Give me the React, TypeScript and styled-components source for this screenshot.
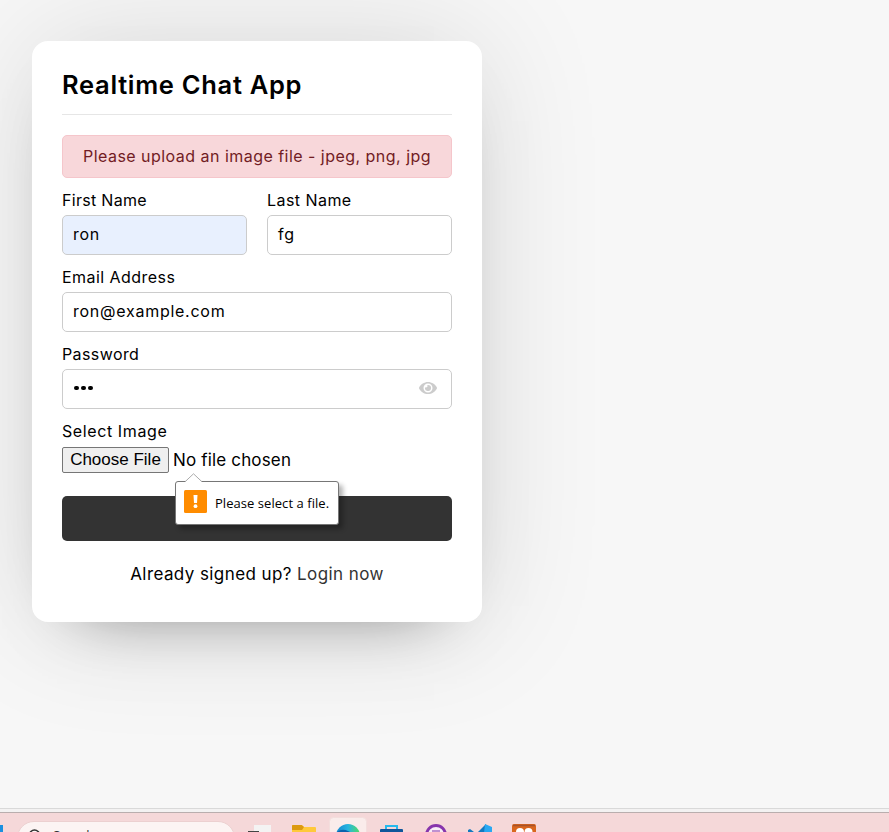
import React from "react";
import styled, { createGlobalStyle } from "styled-components";
import { FaEye } from "react-icons/fa";

const GlobalStyle = createGlobalStyle`
  * { box-sizing: border-box; margin: 0; padding: 0; }
  body {
    background: #f7f7f7;
    color: #000;
    font-family: "Inter", "Open Sans", sans-serif;
    font-size: 16px;
    overflow: hidden;
  }
`;

const Screen = styled.div`
  display: flex;
  flex-direction: column;
  width: 889px;
  height: 832px;
  overflow: hidden;
`;

const Page = styled.main`
  flex: 1;
  min-height: 0;
  padding: 41px 32px 0;
  background: #f7f7f7;
  overflow: hidden;
`;

const Card = styled.section`
  width: 450px;
  height: 581px;
  padding: 25px 30px;
  border-radius: 16px;
  background: #fff;
  box-shadow: 0 0 128px 0 rgba(0, 0, 0, 0.12), 0 32px 64px -48px rgba(0, 0, 0, 0.5);
`;

const Title = styled.header`
  height: 49px;
  padding-bottom: 10px;
  border-bottom: 1px solid #e6e6e6;
  font-size: 25.5px;
  font-weight: 600;
  letter-spacing: 0.7px;
  line-height: 37px;
  white-space: nowrap;
`;

const Form = styled.form`
  display: flex;
  flex-direction: column;
  margin-top: 20px;
`;

const ErrorText = styled.div`
  height: 43px;
  margin-bottom: 10px;
  border: 1px solid #f5c6cb;
  border-radius: 5px;
  background: #f8d7da;
  color: #721c24;
  letter-spacing: 0.47px;
  line-height: 41px;
  text-align: center;
  white-space: nowrap;
`;

const NameRow = styled.div`
  display: grid;
  grid-template-columns: 1fr 1fr;
  column-gap: 20px;
`;

const Field = styled.div`
  display: flex;
  flex-direction: column;
  margin-bottom: 10px;
`;

const Label = styled.label<{ $track?: number }>`
  height: 27px;
  line-height: 24px;
  letter-spacing: ${(p) => p.$track ?? 0.45}px;
  white-space: nowrap;
`;

const InputBox = styled.div<{ $filled?: boolean }>`
  display: flex;
  align-items: center;
  justify-content: space-between;
  height: 40px;
  padding: 0 14px 2px 10px;
  border: 1px solid #ccc;
  border-radius: 5px;
  background: ${(p) => (p.$filled ? "#e8f0fe" : "#fff")};
  letter-spacing: 0.74px;
`;

const Dots = styled.span`
  display: flex;
  gap: 2.5px;
  padding-left: 1px;
`;

const Dot = styled.i`
  width: 4.5px;
  height: 4.5px;
  border-radius: 50%;
  background: #000;
`;

const Eye = styled(FaEye)`
  width: 18px;
  height: 16px;
  color: #ccc;
`;

const FileRow = styled.div`
  position: relative;
  display: flex;
  align-items: center;
  gap: 4px;
  height: 26px;
  margin-top: 1px;
`;

const FileButton = styled.button`
  width: 107px;
  height: 26px;
  border: 1px solid #767676;
  border-radius: 2px;
  background: #efefef;
  color: #000;
  font: 17px/22px "Liberation Sans", Arial, sans-serif;
  white-space: nowrap;
`;

const FileName = styled.span`
  padding-bottom: 1px;
  font-size: 17px;
  line-height: 24px;
  letter-spacing: 0.16px;
  white-space: nowrap;
`;

const Bubble = styled.div`
  position: absolute;
  z-index: 2;
  top: 34px;
  left: 113px;
  display: flex;
  gap: 8px;
  width: 164px;
  height: 44px;
  padding: 8px;
  border: 1px solid #767676;
  border-radius: 3px;
  background: #fff;
  box-shadow: 4px 4px 5px rgba(0, 0, 0, 0.3);
  font: 13px/26px "Open Sans", "Noto Sans", sans-serif;
  letter-spacing: 0.05px;
  white-space: nowrap;
`;

const BubbleArrow = styled.svg`
  position: absolute;
  top: -9px;
  left: 8px;
`;

const Submit = styled.button`
  height: 45px;
  margin-top: 13px;
  border: 0;
  border-radius: 5px;
  background: #333;
`;

const LoginLine = styled.p`
  margin-top: 21px;
  font-size: 17px;
  letter-spacing: 0.41px;
  line-height: 24px;
  text-align: center;
  white-space: nowrap;
`;

const LoginLink = styled.a`
  color: #333;
`;

const WindowEdge = styled.div`
  height: 5px;
  border-top: 1px solid #d9d9d9;
  border-bottom: 1px solid #b9aeae;
  background: #f3f2f2;
`;

const Taskbar = styled.footer`
  display: flex;
  align-items: flex-start;
  height: 19px;
  background: #f5d8d9;
  overflow: hidden;
`;

const StartSliver = styled.div`
  width: 3px;
  height: 7px;
  margin: 12px 14px 0 0;
  background: #1b90e0;
`;

const SearchPill = styled.div`
  display: flex;
  gap: 11px;
  width: 218px;
  height: 34px;
  margin-top: 8px;
  padding: 7px 0 0 10px;
  border: 1px solid #ecd0d0;
  border-radius: 17px;
  background: #fcf4f3;
  color: #333;
  font: 13px/13px "Open Sans", sans-serif;
`;

const TaskIcons = styled.svg`
  flex: none;
`;

export default function App() {
  return (
    <Screen>
      <GlobalStyle />
      <Page>
        <Card>
          <Title>Realtime Chat App</Title>
          <Form onSubmit={(e) => e.preventDefault()}>
            <ErrorText>Please upload an image file - jpeg, png, jpg</ErrorText>
            <NameRow>
              <Field>
                <Label $track={0.3}>First Name</Label>
                <InputBox $filled>ron</InputBox>
              </Field>
              <Field>
                <Label>Last Name</Label>
                <InputBox>fg</InputBox>
              </Field>
            </NameRow>
            <Field>
              <Label>Email Address</Label>
              <InputBox>ron@example.com</InputBox>
            </Field>
            <Field>
              <Label $track={0.4}>Password</Label>
              <InputBox>
                <Dots>
                  <Dot />
                  <Dot />
                  <Dot />
                </Dots>
                <Eye />
              </InputBox>
            </Field>
            <Field>
              <Label $track={0.6}>Select Image</Label>
              <FileRow>
                <FileButton type="button">Choose File</FileButton>
                <FileName>No file chosen</FileName>
                <Bubble>
                  <BubbleArrow width="19" height="10" viewBox="0 0 19 10">
                    <path d="M0.5 9.5 L9.5 0.8 L18.5 9.5 V10 H0.5 Z" fill="#fff" />
                    <path d="M1 8.8 L9.5 0.8 L18 8.8" fill="none" stroke="#aaa" />
                  </BubbleArrow>
                  <svg width="23" height="23" viewBox="0 0 23 23">
                    <rect width="23" height="23" rx="1.5" fill="#ff8c00" />
                    <path d="M9.5 5h4l-.5 8h-3z" fill="#fff" />
                    <circle cx="11.5" cy="16.2" r="1.9" fill="#fff" />
                  </svg>
                  <span>Please select a file.</span>
                </Bubble>
              </FileRow>
            </Field>
            <Submit type="submit" aria-label="Continue to Chat" />
          </Form>
          <LoginLine>
            Already signed up? <LoginLink>Login now</LoginLink>
          </LoginLine>
        </Card>
      </Page>
      <WindowEdge />
      <Taskbar>
        <StartSliver />
        <SearchPill>
          <svg width="14" height="14" viewBox="0 0 14 14">
            <circle cx="6.5" cy="6" r="5" fill="none" stroke="#333" strokeWidth="1.6" />
          </svg>
          <span>Search</span>
        </SearchPill>
        <TaskIcons width="310" height="19" viewBox="235 813 310 19">
          <defs>
            <linearGradient id="edge" x1="0" x2="1">
              <stop offset="0" stopColor="#1687d0" />
              <stop offset="0.5" stopColor="#28b5e0" />
              <stop offset="1" stopColor="#52dc62" />
            </linearGradient>
          </defs>
          <rect x="254" y="825" width="17" height="10" fill="#f4f3f3" />
          <rect x="248" y="831" width="11" height="4" fill="#444" />
          <path d="M292 832v-6q0-1 1-1h9l2 2h11q1 0 1 1v4z" fill="#ffc93b" />
          <path d="M292 830v-4q0-1 1-1h8.500l2.500 2-2 3z" fill="#dc9a10" />
          <rect x="329.500" y="817.500" width="37" height="30" rx="4" fill="#faeceb" stroke="#f3dedd" />
          <circle cx="348" cy="836" r="12" fill="url(#edge)" />
          <path d="M337 832q5-4 11-1l2 1z" fill="#0c62ad" />
          <path d="M386 830v-4h11v4" fill="none" stroke="#27b9ed" strokeWidth="2" />
          <rect x="380" y="829" width="23" height="8" rx="1" fill="#10569b" />
          <circle cx="436" cy="835" r="9.500" fill="#f7edf7" stroke="#8735ac" strokeWidth="3" />
          <path d="M432 831h8" stroke="#8735ac" />
          <path d="M468 830l2-1 4 3h-6z M478 832l8-8v8z" fill="#1379c0" />
          <path d="M485 824l7 3v6h-8z" fill="#29a8f2" />
          <rect x="512" y="824" width="24" height="20" rx="2" fill="#d9661f" />
          <path d="M513 825.500h22" stroke="#a6532a" strokeWidth="1.500" />
          <circle cx="520" cy="832" r="4" fill="#fff" />
          <circle cx="528.500" cy="832" r="4" fill="#fff" />
        </TaskIcons>
      </Taskbar>
    </Screen>
  );
}
